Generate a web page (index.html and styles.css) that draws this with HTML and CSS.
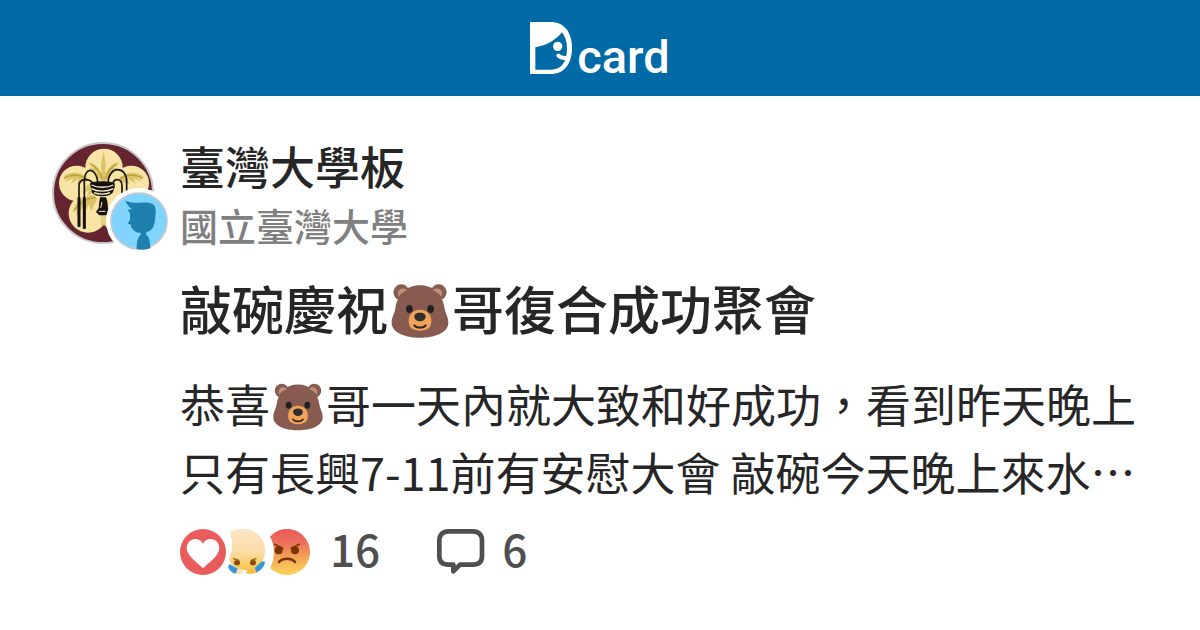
FILE: index.html
```html
<!DOCTYPE html>
<html lang="zh-Hant">
<head>
    <meta charset="UTF-8">
    <meta name="viewport" content="width=device-width, initial-scale=1.0">
    <title>敲碗慶祝🐻哥復合成功聚會 - Dcard</title>

    <link rel="stylesheet" href="styles.css">
</head>
<body>

    <svg class="defs" width="0" height="0" aria-hidden="true">
        <symbol id="bear" viewBox="0 0 172 162">
            <circle cx="30" cy="25" r="24" fill="#875b50"/>
            <circle cx="142" cy="25" r="24" fill="#875b50"/>
            <path d="M86 4C128 4 154 32 160 74C164 94 171 98 171 116C171 145 132 161 86 161C40 161 1 145 1 116C1 98 8 94 12 74C18 32 44 4 86 4Z" fill="#875b50"/>
            <path d="M22 38C14 16 34 6 48 19C38 22 28 30 22 38Z" fill="#bd9279"/>
            <path d="M150 38C158 16 138 6 124 19C134 22 144 30 150 38Z" fill="#bd9279"/>
            <ellipse cx="54" cy="75" rx="10" ry="12" fill="#212121"/>
            <ellipse cx="118" cy="75" rx="10" ry="12" fill="#212121"/>
            <path d="M86 77C108 77 120 92 120 112C120 132 106 140 86 140C66 140 52 132 52 112C52 92 64 77 86 77Z" fill="#f2a259"/>
            <path d="M86 86C98 86 104 92 103 99C102 107 94 112 86 112C78 112 70 107 69 99C68 92 74 86 86 86Z" fill="#2f2f2f"/>
            <path d="M69 124C76 133 96 133 103 124" fill="none" stroke="#2b2522" stroke-width="6" stroke-linecap="round"/>
        </symbol>
    </svg>

    <header class="header">
        <a href="#" class="logo" aria-label="Dcard">
            <svg class="logo-mark" viewBox="0 0 126 156" aria-hidden="true">
                <path fill="#fff" d="M0 0H62C102 0 126 30 126 78C126 126 102 156 62 156H0Z"/>
                <path fill="#006aa6" d="M16 76C50 70 78 54 96 31C105 43 111 58 111 78C111 120 95 143 62 143H16Z"/>
                <circle cx="83" cy="73" r="14" fill="#fff"/>
                <path d="M85 101C91 107 99 109 110 108" fill="none" stroke="#fff" stroke-width="12" stroke-linecap="round"/>
            </svg>
            <span class="logo-text">card</span>
        </a>
    </header>

    <main class="post">
        <div class="avatar">
            <svg class="avatar-school" viewBox="24 24 306 306" role="img" aria-label="國立臺灣大學">
                <circle cx="177" cy="177" r="150" fill="#642531" stroke="#c9c5c6" stroke-width="6"/>
                <g fill="#f8e4a4">
                    <circle cx="180" cy="100" r="56"/>
                    <circle cx="98" cy="148" r="53"/>
                    <circle cx="262" cy="148" r="53"/>
                    <circle cx="132" cy="238" r="58"/>
                    <circle cx="228" cy="238" r="58"/>
                    <circle cx="180" cy="170" r="64"/>
                </g>
                <g fill="#d9c368">
                    <path d="M174 158L171 90L179 52L185 92L182 158Z"/>
                    <path d="M172 120C158 92 144 84 130 86L152 100L136 102L160 116L148 118L174 142Z"/>
                    <path d="M184 120C198 92 212 84 226 86L204 100L220 102L196 116L208 118L184 142Z"/>
                    <path d="M128 128C104 112 76 112 56 130L78 126L62 144L88 132L80 150L104 134L100 150L130 142Z"/>
                    <path d="M228 128C252 112 280 112 300 130L278 126L294 144L268 132L276 150L252 134L256 150L226 142Z"/>
                    <path d="M150 184C120 184 92 202 86 238L98 226L96 248L116 220L118 244L134 212L142 230L160 194Z"/>
                    <path d="M130 152L116 178L136 168L128 188L150 172L146 150Z"/>
                    <path d="M170 240H188V276H170Z" opacity=".6"/>
                </g>
                <path d="M60 134C84 118 108 122 130 136M296 134C272 118 248 122 226 136M92 228C108 204 130 192 154 190M140 92C158 98 170 114 176 136M218 92C202 98 190 114 184 136" fill="none" stroke="#b99d35" stroke-width="4"/>
                <g fill="none" stroke="#17120e" stroke-width="5">
                    <path d="M105 278V156C105 132 134 132 148 148"/>
                    <path d="M121 284V142C121 96 158 98 162 148"/>
                    <path d="M192 148C194 92 248 96 248 142V180"/>
                    <path d="M206 150C210 132 234 132 234 156V180"/>
                </g>
                <path d="M105 190V278M121 190V284" stroke="#17120e" stroke-width="9"/>
                <path d="M138 148C150 140 202 140 212 148V160L206 176C194 190 156 190 144 176Z" fill="#17120e"/>
                <path d="M143 153C160 162 190 162 208 153M142 164C160 174 190 174 208 164M150 176C164 182 186 182 198 176" fill="none" stroke="#f8f0d5" stroke-width="4"/>
                <path d="M168 190H186L190 202L192 222L200 234L188 244H166L156 234L164 222L166 202Z" fill="#17120e"/>
                <path d="M174 204L170 222M164 232H184" stroke="#f8f0d5" stroke-width="3"/>
            </svg>
            <svg class="avatar-user" viewBox="0 0 198 198" aria-hidden="true">
                <circle cx="99" cy="99" r="99" fill="#fff"/>
                <circle cx="99" cy="99" r="84" fill="#81d4fe" stroke="#c5c9cc" stroke-width="5"/>
                <path fill="#1e80ae" d="M58 38C82 48 104 43 128 44C144 46 151 57 149 73C147 90 149 97 143 113C139 125 130 130 121 132V141C129 145 132 157 133 181C119 186 105 186 92 183C92 165 94 149 104 141V134C94 136 85 131 78 121C72 116 77 111 73 109L65 107L72 95V75L64 66L78 63C70 58 63 50 58 38Z"/>
            </svg>
        </div>

        <article class="content">
            <div class="board">臺灣大學板</div>
            <div class="school">國立臺灣大學</div>
            <h1 class="title">敲碗慶祝<svg class="emoji" role="img" aria-label="🐻"><use href="#bear"/></svg>哥復合成功聚會</h1>
            <p class="excerpt">恭喜<svg class="emoji" role="img" aria-label="🐻"><use href="#bear"/></svg>哥一天內就大致和好成功，看到昨天晚上只有長興7-11前有安慰大會 敲碗今天晚上來水…</p>

            <div class="stats">
                <div class="reactions">
                    <svg class="reaction" viewBox="0 0 138 138" role="img" aria-label="愛心">
                        <circle cx="69" cy="69" r="69" fill="#ea5c5c"/>
                        <path fill="#fff" d="M69 44C76 31 91 28 102 32C116 38 121 54 116 67C109 87 89 98 69 118C49 98 29 87 22 67C17 54 22 38 36 32C47 28 62 31 69 44Z"/>
                    </svg>
                    <svg class="reaction" viewBox="0 0 138 138" role="img" aria-label="跪">
                        <defs>
                            <linearGradient id="kneel" x1="0" y1="0" x2="0" y2="1">
                                <stop offset="0" stop-color="#fbe5c6"/>
                                <stop offset=".55" stop-color="#fbdda8"/>
                                <stop offset="1" stop-color="#f8c44a"/>
                            </linearGradient>
                        </defs>
                        <path fill="url(#kneel)" d="M23 9C34 3 48 0 66 0C101 0 129 27 129 63C129 98 106 123 74 123C48 123 30 110 21 92C32 64 34 36 23 9Z"/>
                        <g fill="#8a4b0c">
                            <ellipse cx="45" cy="101" rx="9" ry="8"/>
                            <ellipse cx="93" cy="101" rx="9" ry="8"/>
                        </g>
                        <path d="M35 89L50 94M102 89L87 94" stroke="#9c5c17" stroke-width="4" stroke-linecap="round"/>
                        <path fill="#3598d6" d="M18 113L23 105L50 121L42 134C31 132 22 125 18 113ZM98 117L121 96L129 99C127 113 117 125 103 131Z"/>
                        <path fill="#fce0bd" d="M46 121L60 124L65 130C59 136 48 136 41 134Z"/>
                        <path fill="#f7bd42" d="M96 116L75 124L72 132C81 137 94 134 104 130Z"/>
                    </svg>
                    <svg class="reaction" viewBox="0 0 138 138" role="img" aria-label="森77">
                        <defs>
                            <linearGradient id="angry" x1="0" y1="0" x2="0" y2="1">
                                <stop offset="0" stop-color="#e9595c"/>
                                <stop offset=".3" stop-color="#ec7059"/>
                                <stop offset=".75" stop-color="#f6b958"/>
                                <stop offset="1" stop-color="#fbd45b"/>
                            </linearGradient>
                        </defs>
                        <path fill="url(#angry)" d="M18 23C32 8 49 0 69 0C108 0 138 31 138 69C138 108 107 138 69 138C49 138 32 130 18 117C33 89 35 53 18 23Z"/>
                        <g fill="#7a3500">
                            <ellipse cx="44" cy="64" rx="12" ry="12"/>
                            <ellipse cx="93" cy="64" rx="12" ry="12"/>
                        </g>
                        <path d="M32 46L56 58M106 46L82 58" stroke="#7a3500" stroke-width="5" stroke-linecap="round"/>
                        <path d="M45 99C54 86 84 86 93 99" fill="none" stroke="#7a3500" stroke-width="8" stroke-linecap="round"/>
                    </svg>
                </div>
                <span class="count">16</span>
                <svg class="comment" viewBox="0 0 150 144" role="img" aria-label="留言">
                    <path fill="none" stroke="#4f4f4f" stroke-width="14" stroke-linejoin="round" d="M38 10H110C128 10 138 20 138 38V84C138 102 128 110 110 110H72L52 130V110H38C20 110 10 102 10 84V38C10 20 20 10 38 10Z"/>
                </svg>
                <span class="count">6</span>
            </div>
        </article>
    </main>

</body>
</html>
```
FILE: styles.css
```css
*{
    margin: 0; padding: 0;
    box-sizing: border-box;
}
body{
    background: #fff;
    color: #262626;
    font-family: "Noto Sans CJK TC", "Noto Sans", sans-serif;
}
.defs{
    position: absolute;
}
.header{
    display: flex;
    justify-content: center;
    align-items: center;
    height: 96px;
    background: #006aa6;
}
.logo{
    display: flex;
    align-items: flex-end;
    gap: 5px;
    color: #fff;
    text-decoration: none;
}
.logo-mark{
    width: 42px;
    height: 52px;
}
.logo-text{
    font-family: Roboto, sans-serif;
    font-size: 47px;
    font-weight: 500;
    line-height: 34px;
}
.post{
    display: flex;
    gap: 26px;
    padding: 46px 60px 40px 52px;
}
.avatar{
    position: relative;
    flex: none;
    width: 102px;
    height: 102px;
}
.avatar-school{
    display: block;
    width: 100%;
    height: 100%;
}
.avatar-user{
    position: absolute;
    left: 54px;
    top: 46px;
    width: 66px;
    height: 66px;
}
.content{
    flex: 1;
    min-width: 0;
}
.board{
    font-size: 45px;
    font-weight: 500;
    line-height: 48px;
}
.school{
    margin-top: 7px;
    font-size: 38px;
    font-weight: 500;
    line-height: 56px;
    color: #808080;
}
.title{
    margin-top: 19px;
    font-size: 52px;
    font-weight: 500;
    line-height: 72px;
}
.emoji{
    width: 58px;
    height: 54px;
    margin: 0 3px;
    vertical-align: -8px;
}
.excerpt{
    margin-top: 26px;
    font-size: 45px;
    line-height: 68px;
}
.excerpt .emoji{
    width: 50px;
    height: 48px;
}
.stats{
    display: flex;
    align-items: center;
    margin-top: 16px;
    color: #4f4f4f;
}
.reactions{
    display: flex;
    margin-right: 20px;
}
.reaction{
    width: 46px;
    height: 46px;
    margin-right: -4px;
}
.reaction:last-child{
    margin-right: 0;
}
.count{
    padding-bottom: 8px;
    font-size: 44px;
    font-weight: 500;
    line-height: 52px;
}
.comment{
    width: 50px;
    height: 48px;
    margin: 0 16px 0 56px;
}
```
